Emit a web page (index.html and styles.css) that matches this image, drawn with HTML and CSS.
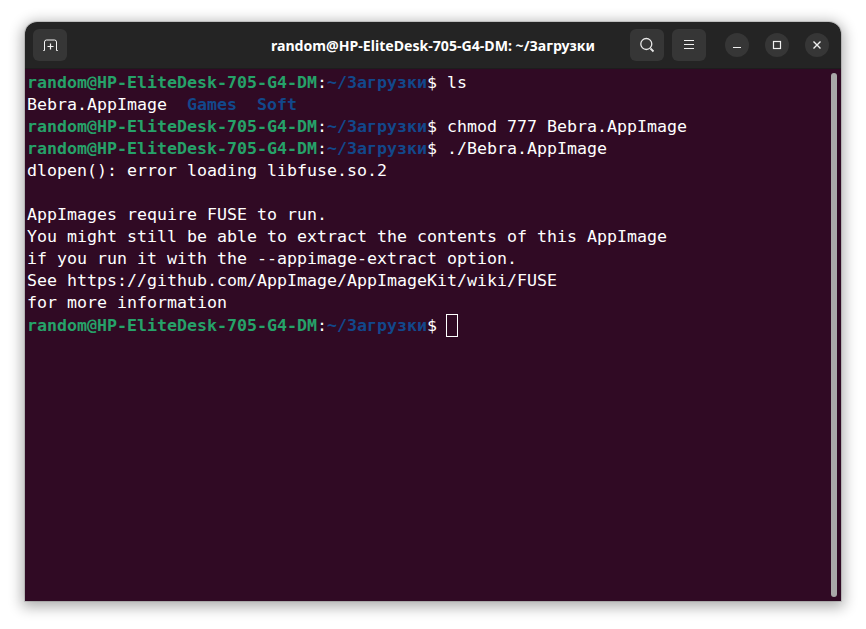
FILE: index.html
```html
<!DOCTYPE html>
<html lang="ru">
<head>
<meta charset="utf-8">
<title>Terminal</title>
<link rel="stylesheet" href="styles.css">
</head>
<body>
<div class="window">
  <header class="titlebar">
    <div class="start">
      <button class="btn"><svg width="16" height="16" viewBox="0 0 16 16" fill="none" stroke="#f4f4f4" stroke-width="1"><path d="M1.300 13.500h1.200V5A2 2 0 0 1 4.500 3h8A2 2 0 0 1 14.500 5v8.500h1.300"/><path d="M8.500 6.500v6M5.500 9.500h6" stroke-width="1.200"/></svg></button>
    </div>
    <div class="title">random@HP-EliteDesk-705-G4-DM: ~/Загрузки</div>
    <div class="end">
      <div class="actions">
        <button class="btn"><svg width="16" height="16" viewBox="0 0 16 16" fill="none" stroke="#e8e8e8" stroke-width="1.300"><circle cx="7.300" cy="7" r="5.500"/><path d="M11.500 11.500l3 3" stroke-width="1.800"/></svg></button>
        <button class="btn"><svg width="16" height="16" viewBox="0 0 16 16" fill="none" stroke="#f0f0f0" stroke-width="1.100"><path d="M3 3.500h10M3 7.500h10M3 11.500h10"/></svg></button>
      </div>
      <div class="controls">
        <button class="circle"><svg width="12" height="12" viewBox="0 0 12 12" fill="none" stroke="#f0f0f0" stroke-width="1.200"><path d="M2 8.500h8"/></svg></button>
        <button class="circle"><svg width="12" height="12" viewBox="0 0 12 12" fill="none" stroke="#f0f0f0" stroke-width="1.200"><rect x="2.500" y="2.500" width="7" height="7"/></svg></button>
        <button class="circle"><svg width="12" height="12" viewBox="0 0 12 12" fill="none" stroke="#f0f0f0" stroke-width="1.400"><path d="M2.500 2.500l7 7M9.500 2.500l-7 7"/></svg></button>
      </div>
    </div>
  </header>
  <main class="term">
    <div class="output">
      <div class="line"><span class="pr">random@HP-EliteDesk-705-G4-DM</span><span>:</span><span class="path">~/Загрузки</span><span>$ ls</span></div>
      <div class="line"><span>Bebra.AppImage  </span><span class="dir">Games</span><span>  </span><span class="dir">Soft</span></div>
      <div class="line"><span class="pr">random@HP-EliteDesk-705-G4-DM</span><span>:</span><span class="path">~/Загрузки</span><span>$ chmod 777 Bebra.AppImage</span></div>
      <div class="line"><span class="pr">random@HP-EliteDesk-705-G4-DM</span><span>:</span><span class="path">~/Загрузки</span><span>$ ./Bebra.AppImage</span></div>
      <div class="line">dlopen(): error loading libfuse.so.2</div>
      <div class="line"></div>
      <div class="line">AppImages require FUSE to run.</div>
      <div class="line">You might still be able to extract the contents of this AppImage</div>
      <div class="line">if you run it with the --appimage-extract option.</div>
      <div class="line">See https://github.com/AppImage/AppImageKit/wiki/FUSE</div>
      <div class="line">for more information</div>
      <div class="line"><span class="pr">random@HP-EliteDesk-705-G4-DM</span><span>:</span><span class="path">~/Загрузки</span><span>$ </span><span class="cursor"></span></div>
    </div>
    <div class="scrollbar"></div>
  </main>
</div>
</body>
</html>
```
FILE: styles.css
```css
html, body {
  margin: 0;
  height: 100%;
  background: #fff;
  overflow: hidden;
}
body {
  padding: 22px 25px 28px 25px;
  box-sizing: border-box;
}
.window {
  width: 816px;
  height: 579px;
  display: flex;
  flex-direction: column;
  border-radius: 12px 12px 0 0;
  overflow: hidden;
  box-shadow: 0 3px 14px 3px rgba(0,0,0,.32), 0 0 0 1px rgba(0,0,0,.12);
}
.titlebar {
  flex: 0 0 47px;
  box-sizing: border-box;
  background: #242424;
  display: grid;
  grid-template-columns: 1fr auto 1fr;
  align-items: center;
  padding: 0 12px 0 8px;
  border-bottom: 1px solid #1d1d1d;
}
.start {
  display: flex;
}
.end {
  display: flex;
  justify-content: flex-end;
}
.btn {
  width: 34px;
  height: 32px;
  border: 0;
  padding: 0;
  border-radius: 6px;
  background: #363636;
  display: flex;
  align-items: center;
  justify-content: center;
}
.title {
  color: #fff;
  font: 700 14.120px "Noto Sans", sans-serif;
  white-space: nowrap;
  transform: translateX(2px);
}
.actions {
  display: flex;
  gap: 8px;
}
.controls {
  display: flex;
  align-items: center;
  gap: 16px;
  margin-left: 19px;
}
.circle {
  width: 24px;
  height: 24px;
  border: 0;
  padding: 0;
  border-radius: 50%;
  background: #363636;
  display: flex;
  align-items: center;
  justify-content: center;
}
.term {
  flex: 1;
  position: relative;
  background: #300a24;
  padding: 3px 2px 0;
  min-height: 0;
}
.output {
  color: #fff;
  font: 16.610px/22px "DejaVu Sans Mono", monospace;
}
.line {
  height: 22px;
  white-space: pre;
}
.pr {
  color: #26a269;
  font-weight: 700;
}
.path {
  color: #12488b;
  font-weight: 700;
}
.dir {
  color: #12488b;
  font-weight: 700;
}
.cursor {
  display: inline-block;
  width: 12px;
  height: 23px;
  margin-left: -1px;
  box-sizing: border-box;
  border: 1px solid #fff;
  vertical-align: -6px;
}
.scrollbar {
  position: absolute;
  top: 4px;
  right: 4px;
  bottom: 4px;
  width: 6px;
  border-radius: 3px;
  background: #a8a8a8;
}
```
